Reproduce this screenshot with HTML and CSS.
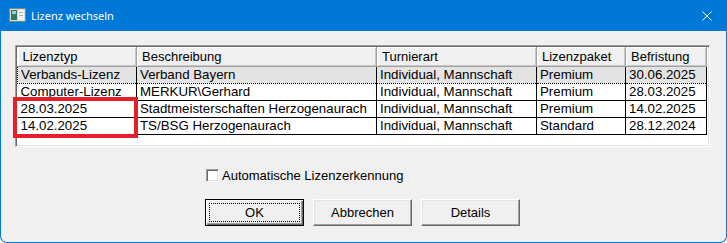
FILE: index.html
```html
<!DOCTYPE html>
<html lang="de">

<head>
    <meta charset="UTF-8">
    <title>Lizenz wechseln</title>
    <link rel="stylesheet" href="styles.css">
</head>

<body>
    <div class="window">
        <div class="titlebar">
            <svg class="appicon" width="17" height="14" viewBox="0 0 17 14">
                <rect x="0.5" y="0.5" width="16" height="13" fill="#d8dcd8" stroke="#7a8a80"/>
                <rect x="2" y="2" width="6" height="10" fill="#2f7a62"/>
                <rect x="3" y="3" width="4" height="3" fill="#9fcfbf"/>
                <rect x="9" y="2" width="6" height="10" fill="#f4f4f4"/>
                <rect x="10" y="4" width="4" height="1" fill="#b0b0b0"/>
                <rect x="10" y="7" width="4" height="1" fill="#b0b0b0"/>
            </svg>
            <span class="title">Lizenz wechseln</span>
            <svg class="close" width="10" height="10" viewBox="0 0 10 10">
                <path d="M0.5 0.5 L9.5 9.5 M9.5 0.5 L0.5 9.5" stroke="#fff" stroke-width="1"/>
            </svg>
        </div>

        <div class="client">
            <div class="list">
                <table>
                    <colgroup>
                        <col style="width:119px">
                        <col style="width:240px">
                        <col style="width:160px">
                        <col style="width:89px">
                        <col style="width:81px">
                    </colgroup>
                    <thead>
                        <tr>
                            <th>Lizenztyp</th>
                            <th>Beschreibung</th>
                            <th>Turnierart</th>
                            <th>Lizenzpaket</th>
                            <th>Befristung</th>
                        </tr>
                    </thead>
                    <tbody>
                        <tr class="selected">
                            <td>Verbands-Lizenz</td>
                            <td>Verband Bayern</td>
                            <td>Individual, Mannschaft</td>
                            <td>Premium</td>
                            <td>30.06.2025</td>
                        </tr>
                        <tr>
                            <td>Computer-Lizenz</td>
                            <td>MERKUR\Gerhard</td>
                            <td>Individual, Mannschaft</td>
                            <td>Premium</td>
                            <td>28.03.2025</td>
                        </tr>
                        <tr>
                            <td>28.03.2025</td>
                            <td>Stadtmeisterschaften Herzogenaurach</td>
                            <td>Individual, Mannschaft</td>
                            <td>Premium</td>
                            <td>14.02.2025</td>
                        </tr>
                        <tr>
                            <td>14.02.2025</td>
                            <td>TS/BSG Herzogenaurach</td>
                            <td>Individual, Mannschaft</td>
                            <td>Standard</td>
                            <td>28.12.2024</td>
                        </tr>
                    </tbody>
                </table>
                <div class="mark"></div>
            </div>

            <label class="check">
                <span class="box"></span>
                <span>Automatische Lizenzerkennung</span>
            </label>

            <div class="buttons">
                <div class="btn default"><span class="focus">OK</span></div>
                <div class="btn">Abbrechen</div>
                <div class="btn">Details</div>
            </div>
        </div>
    </div>
</body>

</html>
```

FILE: styles.css
```css
* {
    box-sizing: border-box;
}

body {
    margin: 0;
    background: #ffffff;
    font-family: "Liberation Sans", Arial, sans-serif;
    font-size: 13px;
    color: #000;
}

.window {
    width: 727px;
    height: 243px;
    border: 1px solid #0078d7;
    border-top: none;
    border-radius: 0 0 7px 7px;
    background: #f0f0f0;
    overflow: hidden;
    display: flex;
    flex-direction: column;
}

.titlebar {
    height: 31px;
    background: #0078d7;
    display: flex;
    align-items: center;
    padding-left: 8px;
    padding-right: 14px;
    flex-shrink: 0;
}

.appicon {
    display: block;
    margin-top: -1px;
}

.title {
    font-family: "Noto Sans", "Open Sans", sans-serif;
    font-size: 11px;
    color: #fff;
    margin-left: 5px;
    flex: 1;
}

.close {
    display: block;
    margin-top: 1px;
}

.client {
    flex: 1;
    padding: 14px 0 0 14px;
    display: flex;
    flex-direction: column;
}

/* list view */

.list {
    position: relative;
    width: 695px;
    height: 102px;
    background: #fff;
    border: 1px solid;
    border-color: #a0a0a0 #ffffff #ffffff #a0a0a0;
    box-shadow: inset 1px 1px 0 #696969, inset -1px -1px 0 #e3e3e3;
    padding: 1px 0 0 1px;
}

table {
    border-collapse: collapse;
    table-layout: fixed;
    width: 689px;
}

th {
    height: 19px;
    padding: 0 0 0 5px;
    font-weight: normal;
    text-align: left;
    background: #f0f0f0;
    border-right: 1px solid #a0a0a0;
    border-bottom: 1px solid #a0a0a0;
    box-shadow: inset 1px 1px 0 #ffffff, inset -1px -1px 0 #c8c8c8;
    white-space: nowrap;
    overflow: hidden;
}

td {
    height: 17px;
    padding: 0 0 0 3px;
    border-right: 1px solid #000;
    border-bottom: 1px solid #000;
    white-space: nowrap;
    overflow: hidden;
    line-height: 15px;
    font-size: 13.3px;
}

tr.selected td {
    background: #e3e3e3;
    border-top: 1px dotted #000;
    border-bottom: 1px dotted #000;
}

tr.selected td:first-child {
    border-left: 1px dotted #000;
}

.mark {
    position: absolute;
    left: -3px;
    top: 51px;
    width: 125px;
    height: 41px;
    border: 4px solid #e51f2a;
}

/* checkbox */

.check {
    display: flex;
    align-items: center;
    margin: 21px 0 0 191px;
    height: 14px;
}

.box {
    width: 13px;
    height: 13px;
    background: #fff;
    border: 1px solid;
    border-color: #a0a0a0 #ffffff #ffffff #a0a0a0;
    box-shadow: inset 1px 1px 0 #696969, inset -1px -1px 0 #e3e3e3;
    margin-right: 3px;
}

/* buttons */

.buttons {
    display: flex;
    gap: 9px;
    margin: 17px 0 0 190px;
}

.btn {
    width: 99px;
    height: 27px;
    display: flex;
    align-items: center;
    justify-content: center;
    background: #f0f0f0;
    border: 1px solid;
    border-color: #ffffff #696969 #696969 #ffffff;
    box-shadow: inset -1px -1px 0 #a0a0a0, inset 1px 1px 0 #e3e3e3;
}

.btn.default {
    border: 1px solid #000;
    box-shadow: inset 1px 1px 0 #ffffff, inset -1px -1px 0 #696969, inset -2px -2px 0 #a0a0a0;
    padding: 3px;
}

.focus {
    width: 100%;
    height: 100%;
    display: flex;
    align-items: center;
    justify-content: center;
    border: 1px dotted #000;
}
```
